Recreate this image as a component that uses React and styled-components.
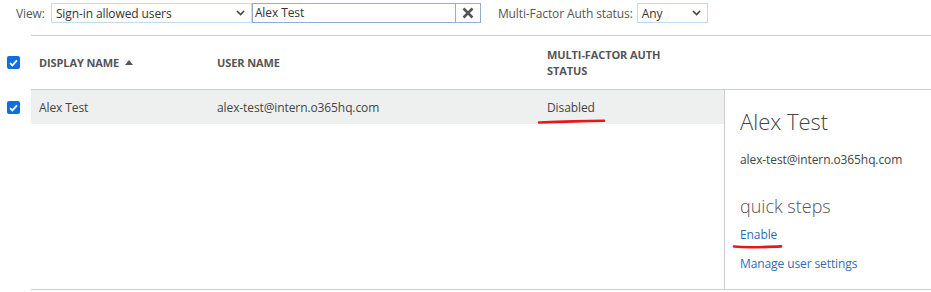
import React from 'react'
import styled, { createGlobalStyle } from 'styled-components'

const Global = createGlobalStyle`
  body {
    margin: 0;
    background: #fff;
    font-family: "Open Sans", "Liberation Sans", sans-serif;
    font-size: 12px;
    letter-spacing: -0.1px;
    color: #444;
  }
`

const Page = styled.div`
  width: 931px;
  height: 292px;
  overflow: hidden;
`

const Toolbar = styled.div`
  display: flex;
  align-items: center;
  height: 20px;
  padding: 3px 0 0 16px;
  gap: 6px;
`

const Label = styled.span`
  color: #555;
  margin-right: ${props => props.$gap || 0}px;
`

const Select = styled.div`
  box-sizing: border-box;
  width: ${props => props.$w}px;
  height: 20px;
  border: 1px solid #c3d9ee;
  display: flex;
  align-items: center;
  justify-content: space-between;
  padding: 0 6px 0 4px;
  color: #333;
`

const SearchBox = styled.div`
  box-sizing: border-box;
  width: 229px;
  height: 20px;
  border: 1px solid #8faed0;
  display: flex;
  margin-left: -6px;
  margin-right: 11px;
`

const SearchText = styled.div`
  flex: 1;
  padding-left: 2px;
  line-height: 18px;
  color: #333;
`

const ClearBtn = styled.div`
  width: 24px;
  border-left: 1px solid #8faed0;
  display: flex;
  align-items: center;
  justify-content: center;
`

const Divider = styled.div`
  margin: 12px 0 0 31px;
  border-top: 1px solid #c8ced4;
`

const HeaderRow = styled.div`
  display: flex;
  height: 53px;
  align-items: center;
`

const CheckCell = styled.div`
  width: 31px;
  display: flex;
  padding-left: 7px;
  box-sizing: border-box;
`

const Check = styled.div`
  width: 13px;
  height: 13px;
  border-radius: 2px;
  background: #0f6fe0;
  display: flex;
  align-items: center;
  justify-content: center;
`

const Cell = styled.div`
  width: ${props => props.$w}px;
  box-sizing: border-box;
  padding-left: 8px;
  position: relative;
`

const HeadText = styled.div`
  font-weight: 700;
  font-size: 11px;
  color: #555;
  line-height: 16px;
  text-transform: uppercase;
  display: flex;
  align-items: center;
  gap: 6px;
`

const Body = styled.div`
  display: flex;
`

const BodyChecks = styled.div`
  width: 31px;
  padding-top: 12px;
`

const Grid = styled.div`
  flex: 1;
  display: flex;
  height: 199px;
  border-top: 1px solid #c8ced4;
  border-bottom: 1px solid #c8ced4;
`

const List = styled.div`
  width: 693px;
`

const Row = styled.div`
  display: flex;
  align-items: center;
  height: 34px;
  background: #eef0f0;
`

const Panel = styled.div`
  flex: 1;
  border-left: 1px solid #c8ced4;
  padding: 15px 0 0 15px;
`

const PanelTitle = styled.div`
  font-size: 22px;
  font-weight: 300;
  letter-spacing: 0;
  line-height: 32px;
  color: #444;
`

const PanelMail = styled.div`
  margin-top: 15px;
  color: #444;
  line-height: 16px;
`

const Section = styled.div`
  font-size: 18px;
  font-weight: 300;
  letter-spacing: 0;
  color: #555;
  margin-top: 26px;
  line-height: 24px;
`

const Link = styled.a`
  display: block;
  position: relative;
  color: #2f6db5;
  line-height: 16px;
  margin-top: ${props => props.$mt}px;
  width: max-content;
`

const Scribble = styled.svg`
  position: absolute;
  left: ${props => props.$x}px;
  top: ${props => props.$y}px;
  overflow: visible;
`

const Tick = () => (
  <svg width="9" height="8" viewBox="0 0 9 8">
    <path d="M1 4.2 L3.4 6.4 L8 1.4" fill="none" stroke="#fff" strokeWidth="1.8" />
  </svg>
)

const Chevron = () => (
  <svg width="9" height="6" viewBox="0 0 9 6">
    <path d="M1 1 L4.5 4.5 L8 1" fill="none" stroke="#444" strokeWidth="1.6" />
  </svg>
)

export default function App() {
  return (
    <Page>
      <Global />
      <Toolbar>
        <Label>View:</Label>
        <Select $w={201}>
          <span>Sign-in allowed users</span>
          <Chevron />
        </Select>
        <SearchBox>
          <SearchText>Alex Test</SearchText>
          <ClearBtn>
            <svg width="12" height="12" viewBox="0 0 12 12">
              <path d="M1.5 1.5 L10.5 10.5 M10.5 1.5 L1.5 10.5" stroke="#555" strokeWidth="2.6" />
            </svg>
          </ClearBtn>
        </SearchBox>
        <Label $gap={-2}>Multi-Factor Auth status:</Label>
        <Select $w={71}>
          <span>Any</span>
          <Chevron />
        </Select>
      </Toolbar>
      <Divider />
      <HeaderRow>
        <CheckCell><Check><Tick /></Check></CheckCell>
        <Cell $w={178}>
          <HeadText>
            Display name
            <svg width="8" height="5" viewBox="0 0 8 5"><path d="M0 5 L4 0 L8 5 Z" fill="#555" /></svg>
          </HeadText>
        </Cell>
        <Cell $w={330}><HeadText>User name</HeadText></Cell>
        <Cell $w={185}><HeadText>Multi-factor auth<br />status</HeadText></Cell>
      </HeaderRow>
      <Body>
        <BodyChecks>
          <CheckCell><Check><Tick /></Check></CheckCell>
        </BodyChecks>
        <Grid>
          <List>
            <Row>
              <Cell $w={178}>Alex Test</Cell>
              <Cell $w={330}>alex-test@intern.o365hq.com</Cell>
              <Cell $w={185}>
                Disabled
                <Scribble $x={-1} $y={20} width="68" height="5" viewBox="0 0 68 5">
                  <path d="M1 3.5 Q20 2.8 36 2.4 T66 1.8" fill="none" stroke="#e3191e" strokeWidth="2.6" strokeLinecap="round" />
                </Scribble>
              </Cell>
            </Row>
          </List>
          <Panel>
            <PanelTitle>Alex Test</PanelTitle>
            <PanelMail>alex-test@intern.o365hq.com</PanelMail>
            <Section>quick steps</Section>
            <Link $mt={9}>
              Enable
              <Scribble $x={-7} $y={17} width="50" height="5" viewBox="0 0 50 5">
                <path d="M1 2.5 Q10 3.6 25 3.2 T48 2.4" fill="none" stroke="#e3191e" strokeWidth="2.6" strokeLinecap="round" />
              </Scribble>
            </Link>
            <Link $mt={13}>Manage user settings</Link>
          </Panel>
        </Grid>
      </Body>
    </Page>
  )
}
